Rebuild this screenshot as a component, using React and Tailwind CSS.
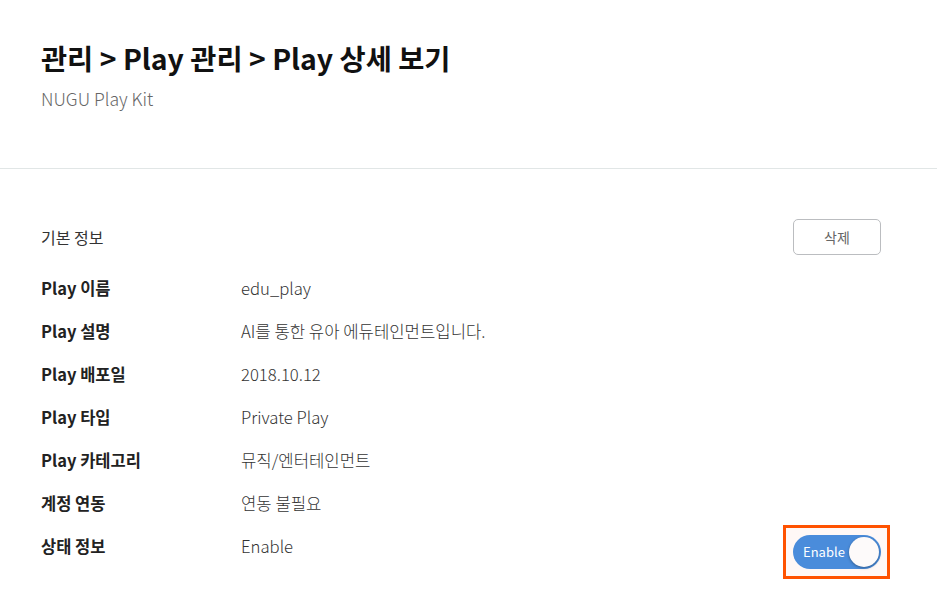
import React from 'react';

const rows = [
  ['Play 이름', 'edu_play'],
  ['Play 설명', 'AI를 통한 유아 에듀테인먼트입니다.'],
  ['Play 배포일', '2018.10.12'],
  ['Play 타입', 'Private Play'],
  ['Play 카테고리', '뮤직/엔터테인먼트'],
  ['계정 연동', '연동 불필요'],
];

function Toggle() {
  return (
    <div className="mt-[11px] border-[3px] border-[#ff5200] bg-[#fff8f6] pl-[7px] pr-[6px] py-[7px]">
      <div className="flex h-[34px] w-[88px] items-center justify-between rounded-full bg-[#4a8cdb] pl-[10px] pr-[2px]">
        <span className="text-[13px] text-white">Enable</span>
        <span className="h-[30px] w-[30px] rounded-full bg-[#fdfafa] shadow-[0_1px_3px_rgba(0,0,0,0.35)]"></span>
      </div>
    </div>
  );
}

export default function App() {
  return (
    <div className="min-h-screen bg-white text-[#222]" style={{ fontFamily: '"Noto Sans CJK KR", "Noto Sans", sans-serif' }}>
      <div className="h-[168px] px-[41px] pt-[38px]">
        <h1 className="text-[28.4px] font-bold leading-[40px] text-[#111]">관리 &gt; Play 관리 &gt; Play 상세 보기</h1>
        <p className="mt-[8px] text-[17.6px] font-light text-[#666]">NUGU Play Kit</p>
      </div>
      <div className="h-px bg-[#e1e6e6]"></div>

      <div className="pl-[41px] pr-[56px] pt-[50px]">
        <div className="flex h-[36px] items-center justify-between">
          <span className="text-[16px] text-[#333]">기본 정보</span>
          <button className="h-[36px] w-[88px] rounded-[5px] border border-[#bbbdc0] text-[14px] text-[#666]">삭제</button>
        </div>

        <div className="mt-[12px]">
          {rows.map(([label, value]) => (
            <div key={label} className="flex h-[43px] items-center">
              <span className="w-[200px] text-[16.5px] font-bold text-[#222]">{label}</span>
              <span className="text-[16.7px] font-light text-[#333]">{value}</span>
            </div>
          ))}
          <div className="flex h-[43px] items-center">
            <span className="w-[200px] text-[16.5px] font-bold text-[#222]">상태 정보</span>
            <span className="text-[16.7px] font-light text-[#333]">Enable</span>
            <div className="ml-auto -mr-[9px]">
              <Toggle />
            </div>
          </div>
        </div>
      </div>
    </div>
  );
}
